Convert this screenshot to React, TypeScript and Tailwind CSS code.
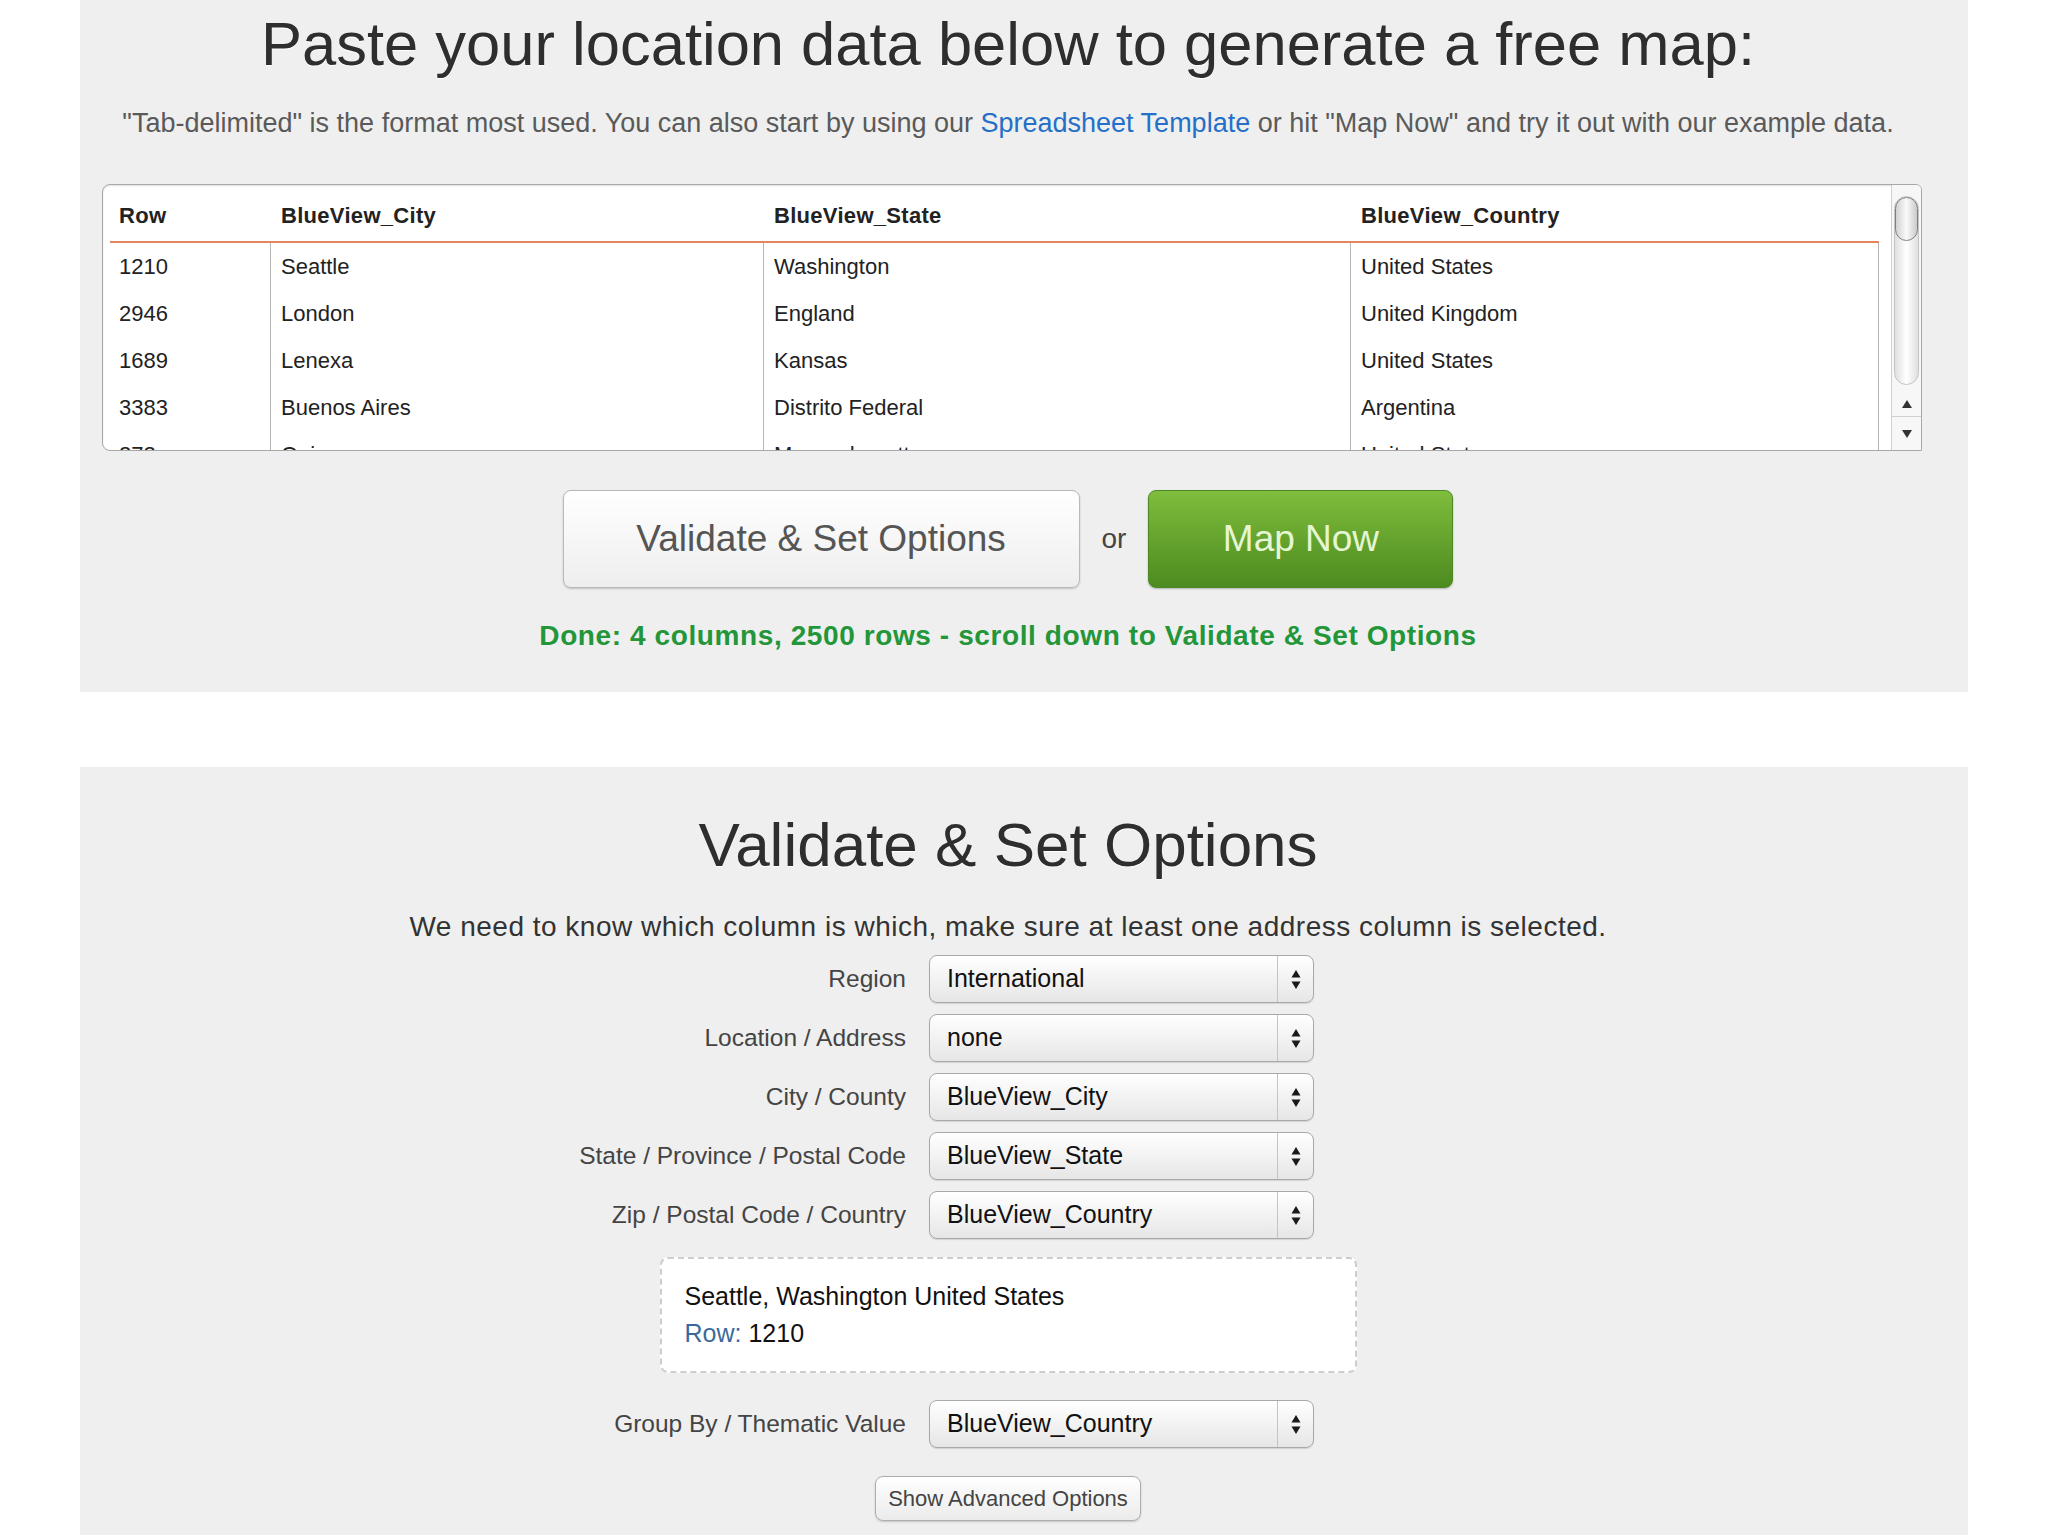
import React from "react";

const rows: string[][] = [
  ["1210", "Seattle", "Washington", "United States"],
  ["2946", "London", "England", "United Kingdom"],
  ["1689", "Lenexa", "Kansas", "United States"],
  ["3383", "Buenos Aires", "Distrito Federal", "Argentina"],
  ["272", "Quincy", "Massachusetts", "United States"],
];

function Select({ value }: { value: string }) {
  return (
    <div className="flex h-[48px] w-[385px] items-stretch rounded-[8px] border border-[#a9a9a9] bg-linear-to-b from-white to-[#e6e6e6] shadow-[0_1px_1px_rgba(0,0,0,0.12)]">
      <div className="flex flex-1 items-center pl-[17px] text-[25px] text-[#111]">{value}</div>
      <div className="flex w-[36px] items-center justify-center border-l border-[#c4c4c4]">
        <svg width="10" height="21" viewBox="0 0 10 21">
          <path d="M5 1 L9.5 8.5 L0.5 8.5 Z" fill="#1a1a1a" />
          <path d="M5 20 L9.5 12.5 L0.5 12.5 Z" fill="#1a1a1a" />
        </svg>
      </div>
    </div>
  );
}

function FormRow({ label, value }: { label: string; value: string }) {
  return (
    <div className="ml-[310px] flex items-center">
      <div className="w-[523px] pr-[23px] text-right text-[24.5px] text-[#444]">{label}</div>
      <Select value={value} />
    </div>
  );
}

function Scrollbar() {
  return (
    <div className="flex w-[30px] flex-col border-l border-[#d0d0d0] bg-[#f7f7f7]">
      <div className="flex flex-1 flex-col px-[2px] pt-[11px] pb-[6px]">
        <div className="flex flex-1 flex-col rounded-full border border-[#c4c4c4] bg-linear-to-r from-[#e0e0e0] via-white to-[#e0e0e0]">
          <div className="h-[44px] rounded-full border border-[#7f7f7f] bg-linear-to-r from-[#d2d2d2] via-[#fafafa] to-[#cacaca]" />
        </div>
      </div>
      <div className="flex h-[26px] items-center justify-center border-b border-[#cfcfcf]">
        <svg width="12" height="10" viewBox="0 0 12 10">
          <path d="M6 1 L11 9 L1 9 Z" fill="#333" />
        </svg>
      </div>
      <div className="flex h-[33px] items-center justify-center">
        <svg width="12" height="10" viewBox="0 0 12 10">
          <path d="M6 9 L11 1 L1 1 Z" fill="#333" />
        </svg>
      </div>
    </div>
  );
}

export default function App() {
  return (
    <div className="min-h-[1536px] w-[2048px] bg-white font-['Liberation_Sans',Arial,sans-serif]">
      {/* Panel 1 */}
      <div className="ml-[80px] flex h-[692px] w-[1888px] flex-col bg-[#efefef] pr-[48px] pl-[16px]">
        <h1 className="pt-[9px] text-center text-[61.5px] leading-[69px] text-[#2e2e2e] [text-shadow:0_1px_0_#fff]">
          Paste your location data below to generate a free map:
        </h1>
        <p className="mt-[30px] text-center text-[27px] leading-[30px] text-[#5a5a5a]">
          "Tab-delimited" is the format most used. You can also start by using our{" "}
          <span className="text-[#2470c8]">Spreadsheet Template</span> or hit "Map Now" and try it out with our example data.
        </p>

        <div className="mt-[46px] ml-[6px] flex h-[267px] w-[1820px] overflow-hidden rounded-l-[8px] rounded-tr-[6px] border border-[#a8a8a8] bg-white shadow-[inset_0_1px_2px_rgba(0,0,0,0.12)]">
          <div className="ml-[7px] flex-1 overflow-hidden">
            <div className="grid grid-cols-[160px_493px_587px_529px] text-[22px] text-[#222]">
              {["Row", "BlueView_City", "BlueView_State", "BlueView_Country"].map((h, i) => (
                <div
                  key={h}
                  className={`h-[58px] border-b-2 border-[#e5865e] pt-[19px] font-bold leading-[24px] tracking-[0.3px] text-[#222] ${i === 0 ? "pl-[9px]" : "pl-[11px]"}`}
                >
                  {h}
                </div>
              ))}
              {rows.map((r) =>
                r.map((c, i) => (
                  <div
                    key={r[0] + i}
                    className={`h-[47px] leading-[47px] ${i === 0 ? "pl-[9px]" : "border-l border-[#b5b5b5] pl-[10px]"} ${i === 3 ? "border-r" : ""}`}
                  >
                    {c}
                  </div>
                ))
              )}
            </div>
          </div>
          <div className="w-[12px]" />
          <Scrollbar />
        </div>

        <div className="mt-[39px] flex items-center justify-center">
          <button className="flex h-[98px] w-[517px] items-center justify-center rounded-[8px] border border-[#b9b9b9] bg-linear-to-b from-white to-[#eeeeee] text-[37px] text-[#555] shadow-[0_1px_2px_rgba(0,0,0,0.2)]">
            Validate &amp; Set Options
          </button>
          <span className="mx-[22px] text-[28px] text-[#444]">or</span>
          <button className="flex h-[98px] w-[305px] items-center justify-center rounded-[8px] border border-[#4b8a22] bg-linear-to-b from-[#7fbd3d] to-[#4c8b1f] text-[37px] text-[#e6f5d2] shadow-[0_1px_2px_rgba(0,0,0,0.25)]">
            Map Now
          </button>
        </div>

        <p className="mt-[32px] text-center text-[28px] leading-[31px] font-bold tracking-[0.6px] text-[#23963a]">
          Done: 4 columns, 2500 rows - scroll down to Validate &amp; Set Options
        </p>
      </div>

      {/* Panel 2 */}
      <div className="mt-[75px] ml-[80px] flex w-[1888px] flex-col bg-[#efefef] pt-[43px] pr-[48px] pb-[14px] pl-[16px]">
        <h2 className="text-center text-[62px] leading-[69px] text-[#2e2e2e] [text-shadow:0_1px_0_#fff]">
          Validate &amp; Set Options
        </h2>
        <p className="mt-[32px] text-center text-[28px] leading-[31px] tracking-[0.5px] text-[#333]">
          We need to know which column is which, make sure at least one address column is selected.
        </p>

        <div className="mt-[13px] flex flex-col gap-[11px]">
          <FormRow label="Region" value="International" />
          <FormRow label="Location / Address" value="none" />
          <FormRow label="City / County" value="BlueView_City" />
          <FormRow label="State / Province / Postal Code" value="BlueView_State" />
          <FormRow label="Zip / Postal Code / Country" value="BlueView_Country" />
        </div>

        <div className="mx-auto mt-[18px] w-[697px] rounded-[8px] border-2 border-dashed border-[#cdcdcd] bg-white pt-[19px] pb-[19px] pl-[23px] text-[25px] leading-[37px] text-[#111]">
          <div>Seattle, Washington United States</div>
          <div>
            <span className="text-[#3a6a9c]">Row:</span> 1210
          </div>
        </div>

        <div className="mt-[27px]">
          <FormRow label="Group By / Thematic Value" value="BlueView_Country" />
        </div>

        <div className="mt-[28px] flex justify-center">
          <button className="h-[45px] rounded-[8px] border border-[#adadad] bg-linear-to-b from-white to-[#ebebeb] px-[12px] text-[22px] text-[#444] shadow-[0_1px_2px_rgba(0,0,0,0.18)]">
            Show Advanced Options
          </button>
        </div>
      </div>
    </div>
  );
}
